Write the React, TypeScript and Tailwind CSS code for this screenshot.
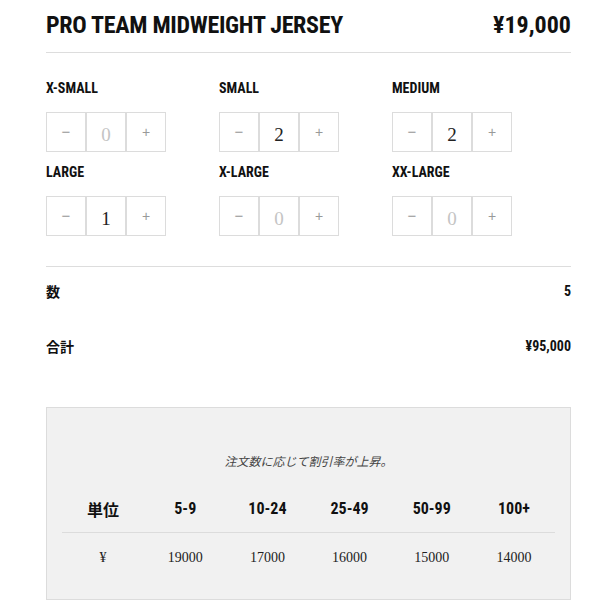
import React from "react";

const cond = "font-['Roboto',sans-serif] font-bold [font-stretch:75%]";
const serif = "font-['Liberation_Serif','DejaVu_Serif',serif]";
const jp = "font-['Noto_Sans_CJK_JP',sans-serif]";

const sizes = [
  { name: "X-SMALL", qty: 0 },
  { name: "SMALL", qty: 2 },
  { name: "MEDIUM", qty: 2 },
  { name: "LARGE", qty: 1 },
  { name: "X-LARGE", qty: 0 },
  { name: "XX-LARGE", qty: 0 },
];

const tiers = [
  { range: "5-9", price: 19000 },
  { range: "10-24", price: 17000 },
  { range: "25-49", price: 16000 },
  { range: "50-99", price: 15000 },
  { range: "100+", price: 14000 },
];

function Stepper({ qty }: { qty: number }) {
  return (
    <div className="flex h-[40px] w-[120px]">
      <button className="flex w-[40px] items-center justify-center border border-[#dcdcdc] text-[15px] text-[#999] font-['Liberation_Sans',sans-serif]">
        −
      </button>
      <div
        className={`flex w-[40px] items-center justify-center border border-[#dcdcdc] pt-[7px] text-[19px] ${serif} ${
          qty > 0 ? "text-[#222]" : "text-[#c4c4c4]"
        }`}
      >
        {qty}
      </div>
      <button className="flex w-[40px] items-center justify-center border border-[#dcdcdc] text-[14px] text-[#999] font-['Liberation_Sans',sans-serif]">
        +
      </button>
    </div>
  );
}

export default function App() {
  const total = sizes.reduce((s, x) => s + x.qty, 0);

  return (
    <div className="min-h-[614px] bg-white text-[#111]">
      <div className="ml-[46px] w-[525px]">
        {/* Header */}
        <div className="flex items-center justify-between border-b border-[#dddddd] pt-[10px] pb-[12px]">
          <h1 className={`${cond} text-[24px] leading-[30px] tracking-[-0.3px]`}>PRO TEAM MIDWEIGHT JERSEY</h1>
          <span className={`${cond} text-[24px] leading-[30px]`}>¥19,000</span>
        </div>

        {/* Sizes */}
        <div className="grid grid-cols-[173px_173px_173px] pt-[27px] pb-[30px]">
          {sizes.map((s, i) => (
            <div key={s.name} className={i >= 3 ? "mt-[12px]" : ""}>
              <div className={`${cond} mb-[15px] text-[14px] leading-[17px]`}>{s.name}</div>
              <Stepper qty={s.qty} />
            </div>
          ))}
        </div>

        {/* Summary */}
        <div className="border-t border-[#dddddd] pt-[16px]">
          <div className="flex justify-between text-[14px] leading-[17px]">
            <span className={`${jp} font-bold`}>数</span>
            <span className={cond}>{total}</span>
          </div>
          <div className="mt-[38px] flex justify-between text-[14px] leading-[17px]">
            <span className={`${jp} font-bold`}>合計</span>
            <span className={cond}>¥95,000</span>
          </div>
        </div>

        {/* Discount table */}
        <div className="mt-[52px] border border-[#dcdcdc] bg-[#f1f1f1] px-[15px] pt-[44px] pb-[31px]">
          <p className={`${jp} text-center text-[12px] leading-[18px] italic text-[#444]`}>
            注文数に応じて割引率が上昇。
          </p>
          <div className="mt-[27px] grid grid-cols-6 border-b border-[#dcdcdc] pb-[11px] text-[16px] leading-[24px]">
            <span className={`${jp} text-center font-bold`}>単位</span>
            {tiers.map((t) => (
              <span key={t.range} className={`${cond} text-center`}>
                {t.range}
              </span>
            ))}
          </div>
          <div className={`grid grid-cols-6 pt-[15px] text-[14px] leading-[20px] text-[#222] ${serif}`}>
            <span className="text-center">¥</span>
            {tiers.map((t) => (
              <span key={t.range} className="text-center">
                {t.price}
              </span>
            ))}
          </div>
        </div>
      </div>
    </div>
  );
}
